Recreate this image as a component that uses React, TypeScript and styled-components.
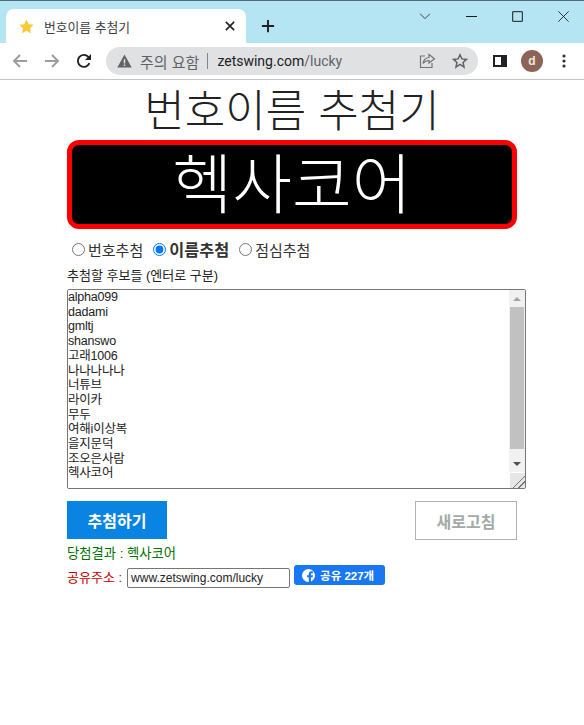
import React from "react";
import styled, { createGlobalStyle } from "styled-components";

const KR = `"Liberation Sans", "Noto Sans CJK KR", sans-serif`;

const GlobalStyle = createGlobalStyle`
  html, body { margin: 0; padding: 0; background: #fff; }
  body { font-family: ${KR}; width: 584px; height: 725px; overflow: hidden; }
`;

const TabStrip = styled.div`
  height: 42px;
  background: #b5e5f2;
  border-top: 1px solid #4d6a78;
  display: flex;
  align-items: flex-end;
  padding-left: 6px;
`;

const Tab = styled.div`
  width: 240px;
  height: 34px;
  background: #fff;
  border-radius: 8px 8px 0 0;
  display: flex;
  align-items: center;
  padding: 0 10px 0 13px;
  box-sizing: border-box;
  gap: 10px;
  margin-right: 11px;
`;

const TabTitle = styled.span`
  flex: 1;
  font-size: 12.8px;
  color: #3c4043;
`;

const NewTab = styled.div`
  width: 22px;
  height: 22px;
  margin-bottom: 6px;
  display: flex;
  align-items: center;
  justify-content: center;
`;

const WindowControls = styled.div`
  margin-left: auto;
  margin-right: -2px;
  height: 30px;
  align-self: flex-start;
  display: flex;
  align-items: center;
`;

const WindowButton = styled.div`
  width: 46px;
  height: 30px;
  display: flex;
  align-items: center;
  justify-content: center;
`;

const Toolbar = styled.div`
  height: 36px;
  background: #fff;
  border-bottom: 1px solid #c4c4c4;
  display: flex;
  align-items: center;
  padding: 0 0 0 4px;
`;

const NavButton = styled.div`
  width: 32px;
  height: 28px;
  display: flex;
  align-items: center;
  justify-content: center;
`;

const Omnibox = styled.div`
  width: 372px;
  height: 28px;
  margin-left: 6px;
  border-radius: 14px;
  background: #e0e1e3;
  display: flex;
  align-items: center;
  padding: 0 10px 0 11px;
  box-sizing: border-box;
  font-size: 14px;
`;

const Warn = styled.span`
  color: #5f6368;
  margin-left: 8px;
  font-size: 15px;
`;

const Divider = styled.span`
  width: 1px;
  height: 16px;
  background: #80868b;
  margin: 0 9px 0 8px;
`;

const Url = styled.span`
  flex: 1;
  color: #202124;
  font-size: 14px;
  font-family: "Roboto", "Liberation Sans", sans-serif;
`;

const UrlPath = styled.span`
  color: #5f6368;
`;

const OmniIcons = styled.div`
  display: flex;
  align-items: center;
  gap: 16px;
`;

const ToolbarRight = styled.div`
  display: flex;
  align-items: center;
  margin-left: 15px;
  gap: 14px;
`;

const Avatar = styled.div`
  width: 22px;
  height: 22px;
  border-radius: 50%;
  background: #8d6558;
  color: #f3e6e0;
  font-size: 12px;
  font-weight: 700;
  display: flex;
  align-items: center;
  justify-content: center;
`;

const MenuDots = styled.svg`
  margin-left: 5px;
`;

const Page = styled.main`
  padding-top: 8px;
  width: 584px;
`;

const Title = styled.h1`
  margin: 0;
  text-align: center;
  font-size: 44px;
  line-height: 48px;
  font-weight: 300;
  color: #222;
`;

const Display = styled.div`
  width: 450px;
  height: 89px;
  margin: 4px auto 0;
  box-sizing: border-box;
  background: #000;
  border: 5px solid #f00;
  border-radius: 12px;
  color: #fff;
  font-size: 65px;
  line-height: 81px;
  font-weight: 300;
  text-align: center;
`;

const Form = styled.form`
  padding-left: 67px;
  display: flex;
  flex-direction: column;
  align-items: flex-start;
`;

const RadioRow = styled.div`
  display: flex;
  align-items: center;
  height: 20px;
  margin: 10px 0 0 5px;
  gap: 10px;
`;

const RadioLabel = styled.label<{ $on?: boolean }>`
  display: flex;
  align-items: center;
  font-size: ${(p) => (p.$on ? 16.3 : 15)}px;
  font-weight: ${(p) => (p.$on ? 700 : 400)};
  color: #333;
  input {
    width: 13px;
    height: 13px;
    margin: 0 3px 0 0;
    accent-color: #0075ff;
  }
`;

const FieldLabel = styled.div`
  font-size: 13px;
  line-height: 16px;
  margin-top: 9px;
  color: #222;
`;

const CandidatesBox = styled.div`
  position: relative;
  width: 459px;
  height: 200px;
  margin-top: 5px;
`;

const Candidates = styled.textarea`
  width: 459px;
  height: 200px;
  margin: 0;
  padding: 0;
  box-sizing: border-box;
  border: 1px solid #767676;
  border-radius: 2px;
  outline: none;
  font-family: ${KR};
  font-size: 12.5px;
  letter-spacing: -0.2px;
  line-height: 14.7px;
  color: #222;
  overflow-y: scroll;
  resize: both;
  display: block;

  &::-webkit-resizer {
    background:
      linear-gradient(135deg, transparent 58%, #777 58%, #777 63%, transparent 63%, transparent 76%, #777 76%, #777 81%, transparent 81%),
      #e6e6e6;
  }
`;

// headless chrome hides real scrollbars, so this one is drawn over the textarea
const ScrollBar = styled.div`
  position: absolute;
  top: 1px;
  right: 1px;
  width: 16px;
  height: 182px;
  background: #f1f1f1;
  display: flex;
  flex-direction: column;
  align-items: center;
`;

const ScrollArrow = styled.div<{ $down?: boolean }>`
  height: 17px;
  flex: none;
  display: flex;
  align-items: center;
  justify-content: center;
  margin-top: ${(p) => (p.$down ? "auto" : "0")};
  &::before {
    content: "";
    border-left: 4px solid transparent;
    border-right: 4px solid transparent;
    ${(p) =>
      p.$down ? "border-top: 4px solid #505050;" : "border-bottom: 4px solid #a3a3a3;"}
  }
`;

const ScrollThumb = styled.div`
  width: 14px;
  height: 142px;
  flex: none;
  background: #c1c1c1;
`;

const Actions = styled.div`
  width: 450px;
  display: flex;
  justify-content: space-between;
  align-items: flex-start;
  margin-top: 12px;
`;

const PrimaryButton = styled.button`
  width: 100px;
  height: 38px;
  border: 0;
  background: #0984e3;
  color: #fff;
  font-family: ${KR};
  font-size: 16px;
  font-weight: 700;
  padding: 0;
`;

const RefreshButton = styled.button`
  width: 102px;
  height: 39px;
  box-sizing: border-box;
  border: 1px solid #b2b2b2;
  background: #fff;
  color: #a4a9a9;
  font-family: ${KR};
  font-size: 16px;
  font-weight: 700;
  padding: 0;
`;

const Result = styled.div`
  font-size: 13.3px;
  line-height: 16px;
  margin-top: 6px;
  color: #007000;
`;

const ShareRow = styled.div`
  display: flex;
  align-items: flex-start;
  margin-top: 1px;
`;

const ShareLabel = styled.span`
  font-size: 13px;
  line-height: 20px;
  margin-top: 5px;
  margin-right: 5px;
  color: #c00000;
`;

const ShareInput = styled.input`
  width: 163px;
  height: 20px;
  margin-top: 5px;
  padding: 0 3px;
  box-sizing: border-box;
  border: 1px solid #767676;
  border-radius: 2px;
  font-family: "Liberation Sans", sans-serif;
  font-size: 12px;
  color: #222;
`;

const FacebookButton = styled.a`
  width: 91px;
  height: 20px;
  margin: 2px 0 0 4px;
  border-radius: 3px;
  background: #1877f2;
  color: #fff;
  font-size: 11.5px;
  font-weight: 700;
  display: flex;
  align-items: center;
  padding-left: 8px;
  box-sizing: border-box;
  gap: 5px;
`;

const Star = () => (
  <svg width="15" height="15" viewBox="0 0 16 16">
    <path d="M8 .6l2.3 4.9 5.3.7-3.9 3.7 1 5.3L8 12.6l-4.7 2.6 1-5.3L.4 6.2l5.3-.7z" fill="#fcc934" />
  </svg>
);

const Stroke = ({ d, w = 16, c = "#202124", sw = 1.6 }: { d: string; w?: number; c?: string; sw?: number }) => (
  <svg width={w} height={w} viewBox="0 0 16 16" fill="none" stroke={c} strokeWidth={sw}>
    <path d={d} />
  </svg>
);

export default function App() {
  const names =
    "alpha099\ndadami\ngmltj\nshanswo\n고래1006\n나나나나나\n너튜브\n라이카\n무두\n여해i이상복\n을지문덕\n조오은사람\n헥사코어\n";

  return (
    <>
      <GlobalStyle />
      <TabStrip>
        <Tab>
          <Star />
          <TabTitle>번호이름 추첨기</TabTitle>
          <Stroke w={12} d="M2.5 2.5l11 11M13.5 2.5l-11 11" sw={2.2} />
        </Tab>
        <NewTab>
          <Stroke w={14} d="M8 1v14M1 8h14" sw={2.2} />
        </NewTab>
        <WindowControls>
          <WindowButton>
            <Stroke w={12} d="M1.5 5l6.5 6.5L14.5 5" sw={1.2} c="#333" />
          </WindowButton>
          <WindowButton>
            <Stroke w={11} d="M0 8h16" sw={1.4} c="#111" />
          </WindowButton>
          <WindowButton>
            <Stroke w={11} d="M1 1h14v14H1z" sw={1.4} c="#111" />
          </WindowButton>
          <WindowButton>
            <Stroke w={11} d="M.5.5l15 15M15.5.5l-15 15" sw={1.2} c="#111" />
          </WindowButton>
        </WindowControls>
      </TabStrip>
      <Toolbar>
        <NavButton>
          <Stroke d="M15 8H2M8 2L2 8l6 6" c="#9a9da1" sw={1.9} />
        </NavButton>
        <NavButton>
          <Stroke d="M1 8h13M8 2l6 6-6 6" c="#9a9da1" sw={1.9} />
        </NavButton>
        <NavButton>
          <svg width="16" height="16" viewBox="0 0 16 16" fill="none">
            <path d="M13.4 10.2A6 6 0 1 1 12.3 3.8L14 5.4" stroke="#202124" strokeWidth="1.9" />
            <path d="M15 1v6H9z" fill="#202124" />
          </svg>
        </NavButton>
        <Omnibox>
          <svg width="15" height="14" viewBox="0 0 16 15">
            <path d="M8 .5L15.7 14.5H.3z" fill="#5f6368" />
            <path d="M7.2 5.500h1.600v4.600H7.200zM7.200 11.200h1.600v1.600H7.200z" fill="#e0e1e3" />
          </svg>
          <Warn>주의 요함</Warn>
          <Divider />
          <Url>
            zetswing.com<UrlPath>/lucky</UrlPath>
          </Url>
          <OmniIcons>
            <svg width="17" height="16" viewBox="0 0 17 16" fill="none" stroke="#70757a" strokeWidth="1.2">
              <path d="M6 3H1.500v11.500h11.500V10" />
              <path d="M10 1.500l5.500 4.200L10 10V7.500c-3 0-4.600 1-6 3 .4-3.200 2.400-5.600 6-6z" />
            </svg>
            <svg width="16" height="16" viewBox="0 0 16 16" fill="none" stroke="#5f6368" strokeWidth="1.5">
              <path d="M8 1.800l1.900 4.100 4.500.5-3.300 3.100.9 4.500L8 11.300l-4 2.700.9-4.500L1.600 6.400l4.500-.5z" />
            </svg>
          </OmniIcons>
        </Omnibox>
        <ToolbarRight>
          <svg width="14" height="12" viewBox="0 0 14 12">
            <path d="M0 0h14v12H0z" fill="#202124" />
            <path d="M2 2h6v8H2z" fill="#fff" />
          </svg>
          <Avatar>d</Avatar>
          <MenuDots width="4" height="14" viewBox="0 0 4 14" fill="#303134">
            <circle cx="2" cy="2" r="1.6" />
            <circle cx="2" cy="7" r="1.6" />
            <circle cx="2" cy="12" r="1.6" />
          </MenuDots>
        </ToolbarRight>
      </Toolbar>
      <Page>
        <Title>번호이름 추첨기</Title>
        <Display>헥사코어</Display>
        <Form onSubmit={(e) => e.preventDefault()}>
          <RadioRow>
            <RadioLabel>
              <input type="radio" name="mode" />
              번호추첨
            </RadioLabel>
            <RadioLabel $on>
              <input type="radio" name="mode" defaultChecked />
              이름추첨
            </RadioLabel>
            <RadioLabel>
              <input type="radio" name="mode" />
              점심추첨
            </RadioLabel>
          </RadioRow>
          <FieldLabel>추첨할 후보들 (엔터로 구분)</FieldLabel>
          <CandidatesBox>
            <Candidates defaultValue={names} spellCheck={false} />
            <ScrollBar>
              <ScrollArrow />
              <ScrollThumb />
              <ScrollArrow $down />
            </ScrollBar>
          </CandidatesBox>
          <Actions>
            <PrimaryButton>추첨하기</PrimaryButton>
            <RefreshButton>새로고침</RefreshButton>
          </Actions>
          <Result>당첨결과 : 헥사코어</Result>
          <ShareRow>
            <ShareLabel>공유주소 :</ShareLabel>
            <ShareInput readOnly value="www.zetswing.com/lucky" />
            <FacebookButton>
              <svg width="13" height="13" viewBox="0 0 16 16">
                <circle cx="8" cy="8" r="8" fill="#fff" />
                <path d="M11 16V10.200h2l.4-2.400H11V6.400c0-.8.3-1.300 1.400-1.300h1V3c-.5-.1-1.200-.2-1.900-.2-2 0-3.200 1.200-3.200 3.300v1.700H6.200v2.400h2.100V16z" fill="#1877f2" />
              </svg>
              공유 227개
            </FacebookButton>
          </ShareRow>
        </Form>
      </Page>
    </>
  );
}
